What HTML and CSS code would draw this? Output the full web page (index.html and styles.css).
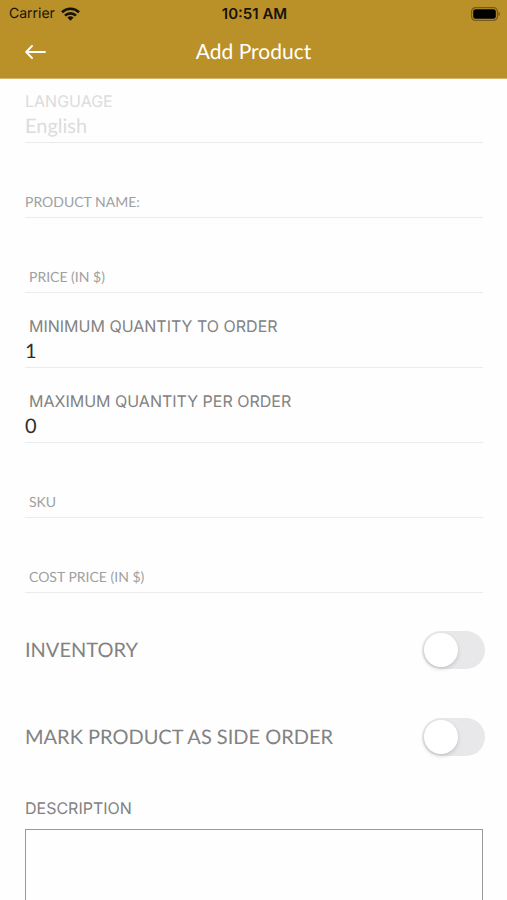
FILE: index.html
```html
<!DOCTYPE html>
<html lang="en">
<head>
  <meta charset="utf-8">
  <meta name="viewport" content="width=device-width, initial-scale=1">
  <title>Add Product</title>
  <link rel="stylesheet" href="styles.css">
</head>
<body>
  <div class="app">
    <header class="header">
      <div class="status">
        <span class="carrier">Carrier
          <svg width="19" height="14" viewBox="0 0 19 14" aria-hidden="true">
            <g fill="none" stroke="#17130a" stroke-width="2.6">
              <path d="M1 5.2a12.2 12.2 0 0 1 17 0"/>
              <path d="M4 8.6a7.8 7.8 0 0 1 11 0"/>
            </g>
            <path d="M6.4 10.6a4.5 4.5 0 0 1 6.2 0L9.500 13.800z" fill="#17130a"/>
          </svg>
        </span>
        <span class="clock">10:51 AM</span>
        <svg class="battery" width="30" height="14" viewBox="0 0 30 14" aria-hidden="true">
          <rect x="1.600" y="0.600" width="25.800" height="12.800" rx="4" fill="none" stroke="#765c1c" stroke-width="1.200"/>
          <rect x="3.200" y="2.200" width="22.600" height="9.600" rx="2.400" fill="#000"/>
          <path d="M28.400 4.700c2 1 2 3.600 0 4.600z" fill="#765c1c"/>
        </svg>
      </div>
      <div class="navbar">
        <button class="back" type="button" aria-label="Back">
          <svg width="21" height="16" viewBox="0 0 21 16" fill="none" stroke="#fff" stroke-width="1.800" stroke-linecap="round" stroke-linejoin="round" aria-hidden="true">
            <path d="M20 8H1.500M7 2L1.200 8 7 14"/>
          </svg>
        </button>
        <h1 class="title">Add Product</h1>
      </div>
    </header>

    <form class="form">
      <div class="field disabled">
        <label for="language">LANGUAGE</label>
        <input id="language" type="text" value="English" disabled>
      </div>
      <div class="field empty">
        <label for="name">PRODUCT NAME:</label>
        <input id="name" type="text">
      </div>
      <div class="field empty inset">
        <label for="price">PRICE (IN $)</label>
        <input id="price" type="text">
      </div>
      <div class="field inset">
        <label for="min">MINIMUM QUANTITY TO ORDER</label>
        <input id="min" type="text" value="1">
      </div>
      <div class="field inset">
        <label for="max">MAXIMUM QUANTITY PER ORDER</label>
        <input id="max" type="text" value="0">
      </div>
      <div class="field empty inset">
        <label for="sku">SKU</label>
        <input id="sku" type="text">
      </div>
      <div class="field empty inset">
        <label for="cost">COST PRICE (IN $)</label>
        <input id="cost" type="text">
      </div>

      <div class="toggles">
        <div class="toggle">
          <label for="inventory">INVENTORY</label>
          <input id="inventory" type="checkbox" role="switch">
        </div>
        <div class="toggle">
          <label for="side">MARK PRODUCT AS SIDE ORDER</label>
          <input id="side" type="checkbox" role="switch">
        </div>
      </div>

      <div class="description">
        <label for="description">DESCRIPTION</label>
        <textarea id="description"></textarea>
      </div>
    </form>
  </div>
</body>
</html>
```
FILE: styles.css
```css
* {
  box-sizing: border-box;
}

body {
  margin: 0;
  background: #fefefe;
  color: #828282;
  font-family: Lato, sans-serif;
  text-rendering: geometricPrecision;
}

.app {
  display: flex;
  flex-direction: column;
  height: 100vh;
}

.header {
  flex: none;
  background: #ba9029;
  border-bottom: 1px solid #d3b56c;
}

.status {
  display: grid;
  grid-template-columns: 1fr auto 1fr;
  align-items: center;
  height: 28px;
  padding: 0 7px 0 9px;
  color: #17130a;
  font: 14px/20px Inter, sans-serif;
}

.carrier {
  display: flex;
  align-items: center;
  gap: 6px;
}

.clock {
  font-size: 15px;
  font-weight: 600;
}

.battery {
  justify-self: end;
}

.navbar {
  display: grid;
  grid-template-columns: 48px 1fr 48px;
  align-items: center;
  height: 50px;
  padding-bottom: 2px;
}

.back {
  display: flex;
  justify-content: flex-end;
  padding: 0 2px;
  border: 0;
  background: none;
}

.title {
  margin: 0;
  color: #fff;
  font-size: 21px;
  font-weight: 400;
  line-height: 28px;
  text-align: center;
}

.form {
  flex: 1;
  min-height: 0;
  overflow-y: auto;
  scrollbar-width: none;
  padding: 0 24px 24px 25px;
}

.field {
  display: grid;
  grid-template-rows: 24px 26px;
  align-content: end;
  height: 75px;
  padding-bottom: 3px;
  border-bottom: 1px solid #ebebeb;
}

.field.disabled {
  height: 64px;
  color: #dcdcdc;
}

.field label,
.description label {
  font: 16px/24px Inter, sans-serif;
}

.field input {
  width: 100%;
  min-width: 0;
  padding: 0;
  border: 0;
  background: none;
  color: #2d2d2d;
  font: 20px/26px Lato, sans-serif;
  text-rendering: inherit;
}

.field.disabled input {
  color: #dcdcdc;
}

.inset label {
  padding-left: 4px;
}

.field.empty label {
  grid-area: 2 / 1;
  align-self: end;
  color: #a0a0a0;
  font: 14px/24px Lato, sans-serif;
}

.field.empty input {
  grid-area: 2 / 1;
}

.toggles {
  display: grid;
  gap: 49px;
  padding: 38px 0 40px;
}

.toggle {
  display: flex;
  align-items: center;
  justify-content: space-between;
  margin-right: -2px;
  font-size: 20px;
  line-height: 24px;
}

.toggle input {
  appearance: none;
  display: flex;
  align-items: center;
  width: 63px;
  height: 38px;
  margin: 0;
  padding: 2px;
  border-radius: 19px;
  background: #e8e8ea;
}

.toggle input::before {
  content: "";
  width: 34px;
  height: 34px;
  border-radius: 50%;
  background: #fff;
  box-shadow: 0 2px 4px rgba(0, 0, 0, 0.16);
}

.toggle input:checked {
  justify-content: flex-end;
  background: #ba9029;
}

.description {
  display: grid;
  gap: 9px;
}

.description textarea {
  height: 160px;
  padding: 8px;
  border: 1px solid #999;
  background: none;
  font: 20px/26px Lato, sans-serif;
  resize: none;
}
```
